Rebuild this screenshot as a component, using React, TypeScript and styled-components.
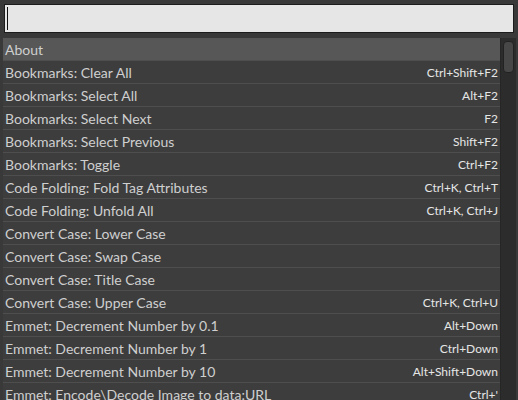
import styled, {createGlobalStyle} from "styled-components";

const GlobalStyle = createGlobalStyle`
    html, body {
        margin: 0;
        padding: 0;
        background: #393939;
        overflow: hidden;
    }
`;

const commands: { name: string, keys?: string }[] = [
    {name: 'About'},
    {name: 'Bookmarks: Clear All', keys: 'Ctrl+Shift+F2'},
    {name: 'Bookmarks: Select All', keys: 'Alt+F2'},
    {name: 'Bookmarks: Select Next', keys: 'F2'},
    {name: 'Bookmarks: Select Previous', keys: 'Shift+F2'},
    {name: 'Bookmarks: Toggle', keys: 'Ctrl+F2'},
    {name: 'Code Folding: Fold Tag Attributes', keys: 'Ctrl+K, Ctrl+T'},
    {name: 'Code Folding: Unfold All', keys: 'Ctrl+K, Ctrl+J'},
    {name: 'Convert Case: Lower Case'},
    {name: 'Convert Case: Swap Case'},
    {name: 'Convert Case: Title Case'},
    {name: 'Convert Case: Upper Case', keys: 'Ctrl+K, Ctrl+U'},
    {name: 'Emmet: Decrement Number by 0.1', keys: 'Alt+Down'},
    {name: 'Emmet: Decrement Number by 1', keys: 'Ctrl+Down'},
    {name: 'Emmet: Decrement Number by 10', keys: 'Alt+Shift+Down'},
    {name: 'Emmet: Encode\\Decode Image to data:URL', keys: 'Ctrl+\''},
];

const CommandPalette = () => {
    return (
        <Panel>
            <SearchBox>
                <Caret/>
            </SearchBox>
            <ListArea>
                <Rows>
                    { commands.map((command, index) => (
                        <Row key={ index } $selected={ index === 0 }>
                            <Name>{ command.name }</Name>
                            { command.keys && <Keys>{ command.keys }</Keys> }
                        </Row>
                    )) }
                </Rows>
                <ScrollTrack>
                    <ScrollThumb/>
                </ScrollTrack>
            </ListArea>
        </Panel>
    )
}

const Panel = styled.div`
    height: 400px;
    display: flex;
    flex-direction: column;
    background: #393939;
    font-family: "Lato", "Open Sans", sans-serif;
    overflow: hidden;
`;

const SearchBox = styled.div`
    margin: 4px 4px 0 4px;
    height: 27px;
    background: #e6e6e6;
    border: 1px solid #1c1c1c;
    display: flex;
    align-items: center;
    padding-left: 2px;
`;

const Caret = styled.div`
    width: 1px;
    height: 23px;
    background: #111;
`;

const ListArea = styled.div`
    margin: 5px 2px 0 3px;
    flex: 1;
    display: flex;
    overflow: hidden;
`;

const Rows = styled.div`
    flex: 1;
    display: flex;
    flex-direction: column;
`;

const Row = styled.div<{ $selected?: boolean }>`
    flex: none;
    height: 22px;
    border-bottom: 1px solid #4e4e4e;
    background: ${ props => props.$selected ? '#575757' : '#3d3d3d' };
    display: flex;
    align-items: center;
    justify-content: space-between;
    padding: 0 2px 0 2px;
`;

const Name = styled.span`
    font-size: 14px;
    color: #cfcfcf;
    white-space: nowrap;
`;

const Keys = styled.span`
    font-size: 12px;
    color: #e6e6e6;
    white-space: nowrap;
`;

const ScrollTrack = styled.div`
    width: 15px;
    background: #2c2c2c;
    border-left: 1px solid #262626;
    padding-top: 3px;
    display: flex;
    justify-content: center;
`;

const ScrollThumb = styled.div`
    width: 9px;
    height: 30px;
    border-radius: 4px;
    background: #474747;
    border: 1px solid #222;
`;

const App = () => {
    return (
        <>
            <GlobalStyle/>
            <CommandPalette/>
        </>
    )
}

export default App;
